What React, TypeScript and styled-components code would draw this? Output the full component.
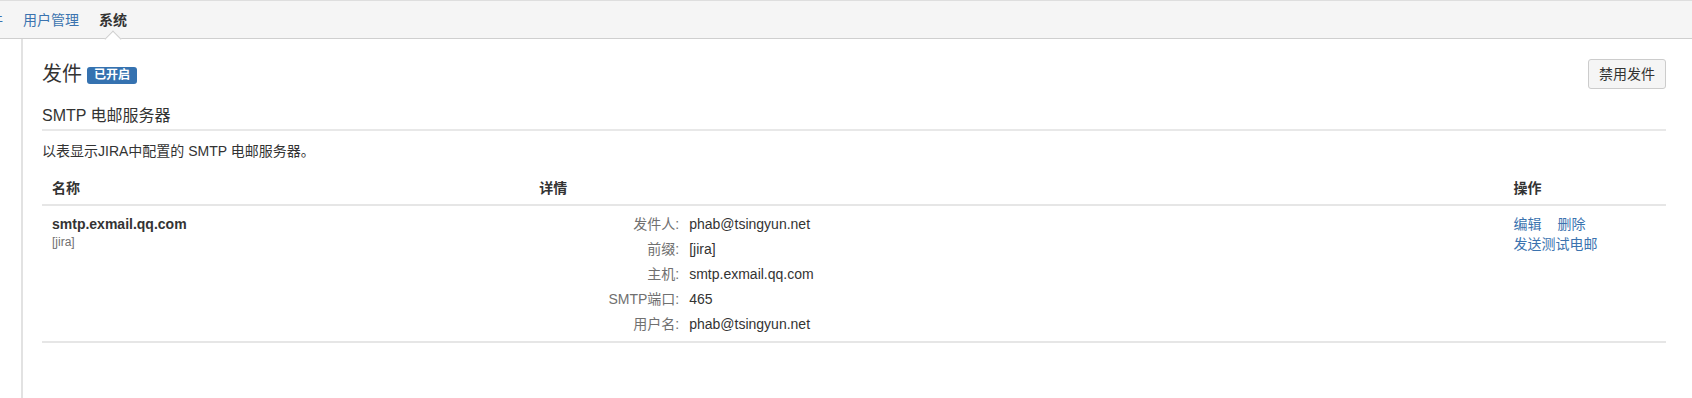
import React from 'react';
import styled, { createGlobalStyle } from 'styled-components';

const GlobalStyle = createGlobalStyle`
  html, body { margin: 0; padding: 0; background: #fff; }
  body {
    font-family: "Liberation Sans", Arial, "Noto Sans CJK SC", sans-serif;
    font-size: 14px;
    line-height: 20px;
    color: #333;
  }
  * { box-sizing: border-box; }
`;

const Page = styled.div`
  display: flex;
  flex-direction: column;
  min-height: 398px;
`;

const TabBar = styled.nav`
  position: relative;
  z-index: 1;
  height: 39px;
  display: flex;
  align-items: stretch;
  gap: 20px;
  background: #f5f5f5;
  border-top: 1px solid #dedede;
  border-bottom: 1px solid #cfcfcf;
`;

const Tab = styled.a<{ $active?: boolean; $offset?: number }>`
  position: relative;
  display: flex;
  align-items: center;
  font-size: 14px;
  text-decoration: none;
  white-space: nowrap;
  color: ${(p) => (p.$active ? '#333' : '#3b73af')};
  font-weight: ${(p) => (p.$active ? 'bold' : 'normal')};
  margin-left: ${(p) => (p.$offset ? `${p.$offset}px` : '0')};

  ${(p) =>
    p.$active &&
    `
    &::after {
      content: '';
      position: absolute;
      left: 50%;
      top: calc(100% + 0.5px);
      width: 11px;
      height: 11px;
      background: #fff;
      border-left: 1px solid #cfcfcf;
      border-top: 1px solid #cfcfcf;
      transform: translate(-50%, -50%) rotate(45deg);
    }
  `}
`;

const Body = styled.div`
  flex: 1;
  display: flex;
`;

const Sidebar = styled.aside`
  width: 23px;
  flex: none;
  border-right: 2px solid #e2e2e2;
`;

const Main = styled.main`
  flex: 1;
  padding: 20px 26px 20px 19px;
`;

const Header = styled.div`
  display: flex;
  align-items: center;
  justify-content: space-between;
  height: 30px;
`;

const TitleGroup = styled.div`
  display: flex;
  align-items: center;
  gap: 5px;
`;

const Title = styled.h2`
  margin: 0;
  font-size: 20px;
  line-height: 24px;
  font-weight: normal;
  color: #333;
`;

const Lozenge = styled.span`
  display: inline-block;
  height: 17px;
  padding: 2px 7px;
  border-radius: 3px;
  background: #3572b0;
  color: #fff;
  font-size: 12px;
  line-height: 13px;
  font-weight: bold;
  margin-top: 2px;
`;

const Button = styled.button`
  height: 30px;
  padding: 0 10px;
  border: 1px solid #ccc;
  border-radius: 3px;
  background: #f5f5f5;
  color: #333;
  font-family: inherit;
  font-size: 14px;
  line-height: 20px;
  cursor: pointer;
`;

const SectionTitle = styled.h3`
  margin: 17px 0 0;
  padding-bottom: 3px;
  font-size: 16px;
  line-height: 20px;
  font-weight: normal;
  color: #333;
  border-bottom: 2px solid #e8e8e8;
`;

const Description = styled.p`
  margin: 10px 0 0;
  font-size: 14px;
  line-height: 20px;
`;

const Table = styled.table`
  width: 100%;
  margin-top: 11px;
  border-collapse: collapse;
  table-layout: fixed;
`;

const Th = styled.th`
  padding: 6px 10px;
  text-align: left;
  font-weight: bold;
  color: #333;
  border-bottom: 2px solid #e6e6e6;
`;

const Td = styled.td`
  padding: 7.5px 10px 7px;
  vertical-align: top;
  border-bottom: 2px solid #e6e6e6;
`;

const ServerName = styled.div`
  font-weight: bold;
  line-height: 20px;
`;

const Secondary = styled.div`
  font-size: 12px;
  line-height: 16px;
  color: #707070;
`;

const Details = styled.dl`
  margin: 0;
  display: grid;
  grid-template-columns: 140px 1fr;
  column-gap: 10px;
  row-gap: 5.1px;
`;

const Label = styled.dt`
  text-align: right;
  color: #707070;
`;

const Value = styled.dd`
  margin: 0;
  color: #333;
`;

const Ops = styled.ul`
  margin: 0;
  padding: 0;
  list-style: none;
  display: flex;
  flex-wrap: wrap;
  column-gap: 16px;
`;

const OpLink = styled.a`
  color: #3b73af;
  text-decoration: none;
  white-space: nowrap;
`;

const details: [string, string][] = [
  ['发件人:', 'phab@tsingyun.net'],
  ['前缀:', '[jira]'],
  ['主机:', 'smtp.exmail.qq.com'],
  ['SMTP端口:', '465'],
  ['用户名:', 'phab@tsingyun.net'],
];

export default function App() {
  return (
    <Page>
      <GlobalStyle />
      <TabBar>
        <Tab href="#" $offset={-25}>插件</Tab>
        <Tab href="#">用户管理</Tab>
        <Tab href="#" $active>系统</Tab>
      </TabBar>
      <Body>
        <Sidebar />
        <Main>
          <Header>
            <TitleGroup>
              <Title>发件</Title>
              <Lozenge>已开启</Lozenge>
            </TitleGroup>
            <Button>禁用发件</Button>
          </Header>
          <SectionTitle>SMTP 电邮服务器</SectionTitle>
          <Description>以表显示JIRA中配置的 SMTP 电邮服务器。</Description>
          <Table>
            <colgroup>
              <col style={{ width: '30%' }} />
              <col style={{ width: '60%' }} />
              <col style={{ width: '10%' }} />
            </colgroup>
            <thead>
              <tr>
                <Th>名称</Th>
                <Th>详情</Th>
                <Th>操作</Th>
              </tr>
            </thead>
            <tbody>
              <tr>
                <Td>
                  <ServerName>smtp.exmail.qq.com</ServerName>
                  <Secondary>[jira]</Secondary>
                </Td>
                <Td>
                  <Details>
                    {details.map(([k, v]) => (
                      <React.Fragment key={k}>
                        <Label>{k}</Label>
                        <Value>{v}</Value>
                      </React.Fragment>
                    ))}
                  </Details>
                </Td>
                <Td>
                  <Ops>
                    <li><OpLink href="#">编辑</OpLink></li>
                    <li><OpLink href="#">删除</OpLink></li>
                    <li><OpLink href="#">发送测试电邮</OpLink></li>
                  </Ops>
                </Td>
              </tr>
            </tbody>
          </Table>
        </Main>
      </Body>
    </Page>
  );
}
